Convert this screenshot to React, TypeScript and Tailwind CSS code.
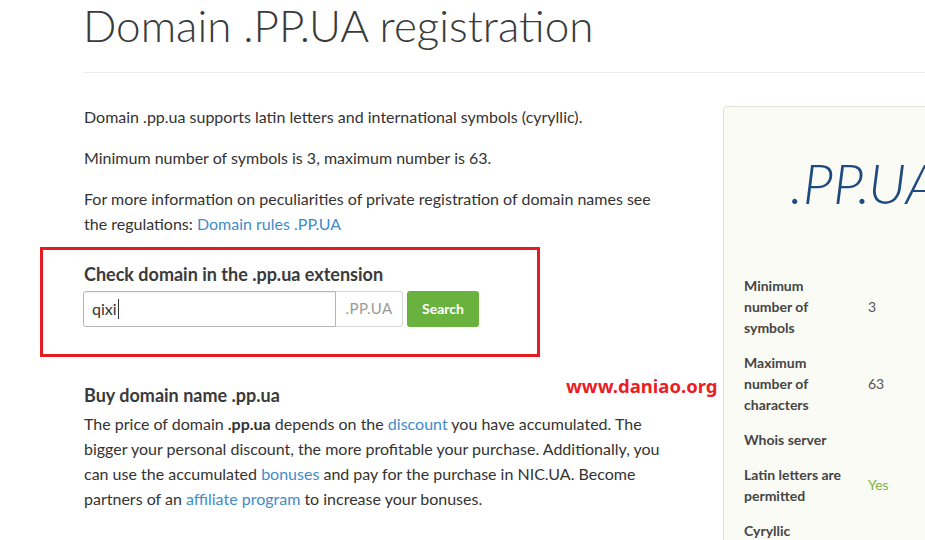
import React from "react";

export default function App() {
  return (
    <div className="relative w-[925px] h-[540px] overflow-hidden bg-white text-[#333] font-['Lato',sans-serif]">
      <div className="w-[1240px] pl-[84px]">
        <h1 className="text-[44px] font-light leading-[1.2] text-[#3a3a3a] mt-[-1px] -ml-[1px]">
          Domain .PP.UA registration
        </h1>
        <div className="mt-[20px] border-t border-[#eaeaea]" />
        <div className="flex gap-[39px]">
          <div className="w-[600px] shrink-0 text-[16px] leading-[25px]">
            <p className="mt-[31px]">Domain .pp.ua supports latin letters and international symbols (cyryllic).</p>
            <p className="mt-[16px]">Minimum number of symbols is 3, maximum number is 63.</p>
            <p className="mt-[16px] w-[580px]">
              For more information on peculiarities of private registration of domain names see the regulations:{" "}
              <a className="text-[#428bca]">Domain rules .PP.UA</a>
            </p>
            <h3 className="mt-[26px] text-[18px] font-bold leading-[24px] text-[#3a3a3a]">
              Check domain in the .pp.ua extension
            </h3>
            <div className="mt-[5px] flex items-stretch h-[36px]">
              <div className="w-[253px] -ml-px border border-[#b5b5b5] rounded-l-[3px] flex items-center pl-[8px] text-[16px] text-[#333] shadow-[inset_0_1px_1px_rgba(0,0,0,0.06)]">
                qixi<span className="inline-block w-px h-[20px] bg-[#333] ml-[1px]" />
              </div>
              <div className="w-[67px] border border-l-0 border-[#d6d6d6] rounded-r-[3px] flex items-center justify-center text-[15px] text-[#9a9a9a] tracking-[0.5px]">
                .PP.UA
              </div>
              <button className="ml-[4px] w-[72px] rounded-[3px] bg-[#6ab23e] text-white text-[14px] font-bold">
                Search
              </button>
            </div>
            <h3 className="mt-[56px] text-[18px] font-bold leading-[24px] text-[#3a3a3a]">Buy domain name .pp.ua</h3>
            <p className="mt-[4px] w-[585px]">
              The price of domain <b>.pp.ua</b> depends on the <a className="text-[#428bca]">discount</a> you have
              accumulated. The bigger your personal discount, the more profitable your purchase. Additionally, you can
              use the accumulated <a className="text-[#428bca]">bonuses</a> and pay for the purchase in NIC.UA. Become
              partners of an <a className="text-[#428bca]">affiliate program</a> to increase your bonuses.
            </p>
          </div>
          <aside className="mt-[33px] w-[306px] h-[500px] shrink-0 rounded-[4px] border border-[#e2e2d2] bg-[#fbfbf6] pl-[20px]">
            <div className="mt-[42px] pl-[46px] text-[56px] font-light italic leading-[1.2] text-[#1f4a80] whitespace-nowrap">
              .PP.UA
            </div>
            <table className="mt-[52px] text-[14px] leading-[21px]">
              <tbody>
                {[
                  ["Minimum number of symbols", "3", ""],
                  ["Maximum number of characters", "63", ""],
                  ["Whois server", "", ""],
                  ["Latin letters are permitted", "Yes", "green"],
                  ["Cyryllic symbols are permitted", "Yes", "green"],
                ].map(([l, v, c]) => (
                  <tr key={l}>
                    <td className="w-[124px] pr-[26px] py-[7px] align-middle font-bold text-[#454545]">{l}</td>
                    <td className={"py-[7px] align-middle " + (c ? "text-[#7db447]" : "text-[#555]")}>{v}</td>
                  </tr>
                ))}
              </tbody>
            </table>
          </aside>
        </div>
      </div>
      <div className="absolute left-[40px] top-[247px] w-[500px] h-[110px] border-[3px] border-[#e41b23]" />
      <div className="absolute left-[566px] top-[372px] text-[18.5px] font-bold leading-[28px] text-[#ee1c25] font-['Noto_Sans',sans-serif]">
        www.daniao.org
      </div>
    </div>
  );
}
